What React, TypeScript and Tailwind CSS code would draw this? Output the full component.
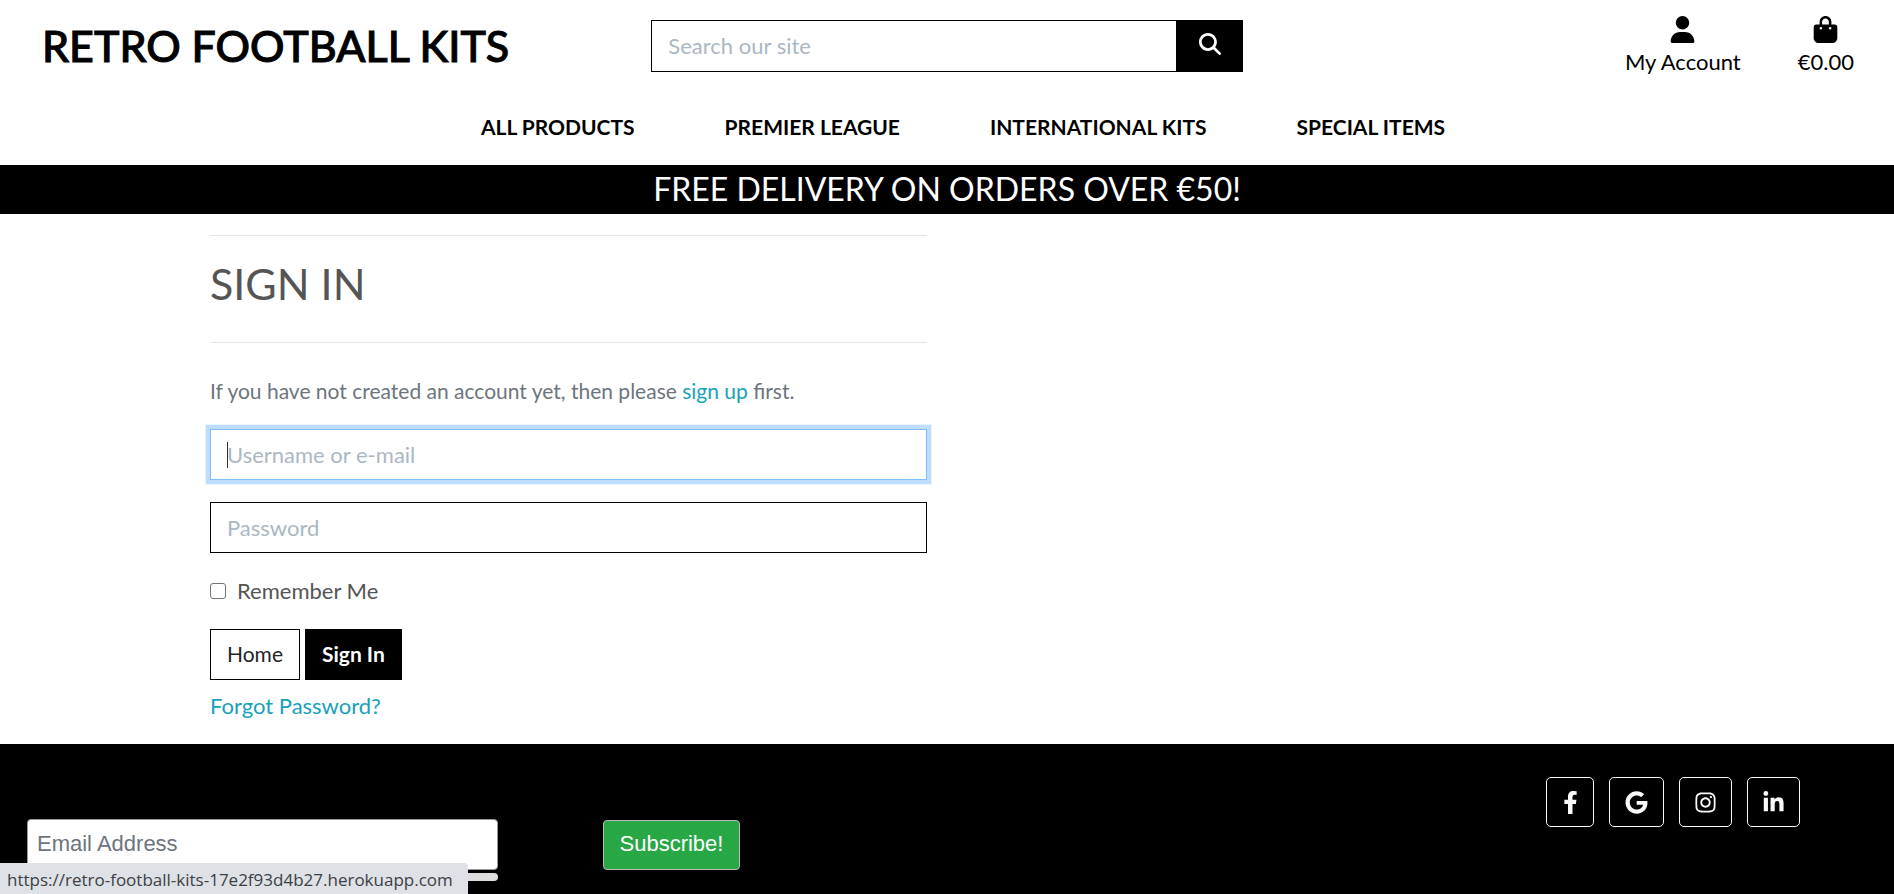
import { FaFacebookF, FaGoogle, FaInstagram, FaLinkedinIn } from "react-icons/fa";
import { FaUser, FaBagShopping, FaMagnifyingGlass } from "react-icons/fa6";

const links = ["ALL PRODUCTS", "PREMIER LEAGUE", "INTERNATIONAL KITS", "SPECIAL ITEMS"];

const socials = [
  { name: "Facebook", Icon: FaFacebookF, width: "w-12" },
  { name: "Google", Icon: FaGoogle, width: "w-[55px]" },
  { name: "Instagram", Icon: FaInstagram, width: "w-[53px]" },
  { name: "LinkedIn", Icon: FaLinkedinIn, width: "w-[53px]" },
];

function Header() {
  return (
    <header>
      <div className="grid h-20 grid-cols-3 pt-5">
        <a href="#" className="pl-[42px] text-[43px] leading-[52px] font-medium text-black whitespace-nowrap [-webkit-text-stroke:1px_black]">
          RETRO FOOTBALL KITS
        </a>
        <form className="flex h-[52px] px-5" role="search">
          <input
            type="search"
            aria-label="Search our site"
            placeholder="Search our site"
            className="min-w-0 flex-1 border border-black px-4 placeholder:text-[#aab7c4] outline-none"
          />
          <button type="button" aria-label="Search" className="flex w-[66px] items-center justify-center bg-black pb-1 text-white">
            <FaMagnifyingGlass size={22} />
          </button>
        </form>
        <div className="-mt-1 flex justify-end gap-[57px] pr-10 text-black">
          <a href="#" className="flex flex-col items-center gap-[3px]">
            <FaUser size={27} />
            <span className="leading-8">My Account</span>
          </a>
          <a href="#" className="flex flex-col items-center gap-[3px]">
            <FaBagShopping size={27} />
            <span className="leading-8">€0.00</span>
          </a>
        </div>
      </div>
      <nav className="flex h-[85px] items-center justify-center gap-[90px] pt-2 pl-8 text-[21px]">
        {links.map((l) => (
          <a key={l} href="#" className="font-bold text-black">{l}</a>
        ))}
      </nav>
    </header>
  );
}

function SignIn() {
  return (
    <main className="px-[210px] pt-[21px] pb-[22px] text-[#555]">
      <div className="w-[717px] max-w-full">
        <hr className="border-[#e5e5e5]" />
        <h1 className="pt-[22px] pb-[33px] text-[43px] leading-[51px]">SIGN IN</h1>
        <hr className="border-[#e5e5e5]" />
        <p className="pt-8 pb-[22px] text-[21px] leading-8 text-[#6c757d]">
          If you have not created an account yet, then please <a href="#" className="text-[#17a2b8]">sign up</a> first.
        </p>
        <form className="flex flex-col">
          <div className="relative">
            <input
              type="text"
              autoFocus
              aria-label="Username or e-mail"
              placeholder="Username or e-mail"
              className="peer block h-[51px] w-full border border-[#80bdff] px-4 pb-px shadow-[0_0_0_4px_#bfdeff,0_0_0_5px_#e9f4ff] outline-none placeholder:text-[#aab7c4] placeholder-shown:caret-transparent"
            />
            <span className="pointer-events-none absolute top-[13px] left-[17px] hidden h-[26px] w-px bg-[#333] peer-placeholder-shown:block" />
          </div>
          <input
            type="password"
            aria-label="Password"
            placeholder="Password"
            className="mt-[22px] h-[51px] border border-black px-4 pb-px outline-none placeholder:text-[#aab7c4]"
          />
          <div className="flex items-center gap-[11px] py-[22px]">
            <input id="remember" type="checkbox" className="size-4 shrink-0 appearance-none rounded-[3px] border border-[#767676] bg-white" />
            <label htmlFor="remember" className="leading-8">Remember Me</label>
          </div>
          <div className="flex gap-[5px] text-[21px]">
            <a href="#" className="flex h-[51px] items-center border border-black px-4 pb-0.5 text-[#212529]">Home</a>
            <button type="button" className="h-[51px] bg-black px-[17px] pb-0.5 font-bold text-white">Sign In</button>
          </div>
          <a href="#" className="mt-[10px] self-start leading-8 text-[#17a2b8]">Forgot Password?</a>
        </form>
      </div>
    </main>
  );
}

function Footer() {
  return (
    <footer className="flex flex-1 justify-between overflow-hidden bg-black pl-[27px] pr-[94px]">
      <form className="flex gap-[105px] pt-[75px] font-['Liberation_Sans',sans-serif]">
        <div>
          <input
            type="email"
            aria-label="Email Address"
            placeholder="Email Address"
            className="block h-[51px] w-[471px] rounded border border-[#999] bg-white px-[9px] pb-0.5 outline-none placeholder:text-[#6c757d]"
          />
          <div className="mt-[3px] h-2 rounded bg-[#ddd]" />
        </div>
        <button type="button" className="mt-px h-[50px] w-[137px] rounded border border-[#bbb] bg-[#28a745] pb-0.5 text-[22px] text-white">
          Subscribe!
        </button>
      </form>
      <div className="flex gap-[15px] pt-[33px]">
        {socials.map(({ name, Icon, width }) => (
          <a key={name} href="#" aria-label={name} className={`${width} flex h-[50px] items-center justify-center rounded-[5px] border border-[#f8f9fa] text-[#f8f9fa]`}>
            <Icon size={23} />
          </a>
        ))}
      </div>
    </footer>
  );
}

export default function App() {
  return (
    <div className="flex min-h-screen flex-col bg-white font-['Lato',sans-serif] text-[22px] leading-8">
      <Header />
      <div className="h-[49px] bg-black text-center text-[32px] leading-[47px] text-white">FREE DELIVERY ON ORDERS OVER €50!</div>
      <SignIn />
      <Footer />
      <div className="fixed bottom-0 left-0 h-[31px] w-[468px] rounded-tr bg-[#dee1e6] pl-[7px] font-['Open_Sans',sans-serif] text-[17px] leading-[34px] whitespace-nowrap text-[#3c4043]">
        https://retro-football-kits-17e2f93d4b27.herokuapp.com
      </div>
    </div>
  );
}
